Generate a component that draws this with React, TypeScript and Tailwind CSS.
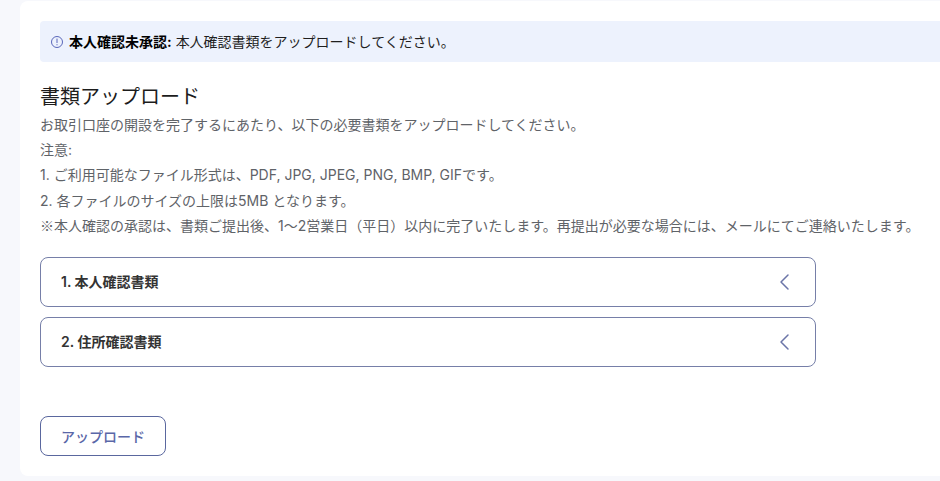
const FONT = "font-['Inter','Noto_Sans_CJK_JP',sans-serif]";

const Chevron = () => (
  <svg className="w-[24px] h-[24px] text-[#6b75a8]" fill="none" viewBox="0 0 24 24" strokeWidth={1.5} stroke="currentColor">
    <path strokeLinecap="round" strokeLinejoin="round" d="M16 5l-7 7 7 7" />
  </svg>
);

const InfoIcon = () => (
  <svg className="w-[14px] h-[14px] text-[#5a67ba] shrink-0" fill="none" viewBox="0 0 14 14" stroke="currentColor" strokeWidth={1}>
    <circle cx="7" cy="7" r="5.5" />
    <path strokeLinecap="round" d="M7 4v3.6M7 9.6v.3" />
  </svg>
);

const SECTIONS = ['1. 本人確認書類', '2. 住所確認書類'];

export default function App() {
  return (
    <div className={`h-[481px] overflow-hidden bg-[#f7f8fc] pl-[20px] pt-px ${FONT}`}>
      <div className="w-[960px] h-[475px] bg-white rounded-[8px] pl-[20px] pr-[20px] pt-[20px]">
        {/* Alert */}
        <div className="h-[41px] w-full bg-[#edf2fd] rounded-[4px] flex items-center pl-[10px] gap-[5px] text-[14px] text-[#1f1f1f]">
          <InfoIcon />
          <p><span className="font-bold text-black">本人確認未承認:</span> 本人確認書類をアップロードしてください。</p>
        </div>

        {/* Heading */}
        <h1 className="mt-[21px] text-[20px] leading-[28px] text-[#1c1c1c]">書類アップロード</h1>
        <div className="text-[14px] leading-[25.2px] text-[#5f6368] mt-[1px] whitespace-nowrap">
          <p>お取引口座の開設を完了するにあたり、以下の必要書類をアップロードしてください。</p>
          <p>注意:</p>
          <p>1. ご利用可能なファイル形式は、PDF, JPG, JPEG, PNG, BMP, GIFです。</p>
          <p>2. 各ファイルのサイズの上限は5MB となります。</p>
          <p><span className="font-['Noto_Sans_CJK_JP',sans-serif]">※</span>本人確認の承認は、書類ご提出後、1〜2営業日（平日）以内に完了いたします。再提出が必要な場合には、メールにてご連絡いたします。</p>
        </div>

        {/* Accordions */}
        <div className="mt-[19px] w-[776px] flex flex-col gap-[10px]">
          {SECTIONS.map((label) => (
            <div key={label} className="h-[50px] border border-[#767fa8] rounded-[8px] flex items-center justify-between pl-[20px] pr-[19px]">
              <span className="text-[14px] font-semibold text-[#333333] -translate-y-px">{label}</span>
              <Chevron />
            </div>
          ))}
        </div>

        <button type="button" className="mt-[49px] w-[126px] h-[40px] border border-[#5a679e] rounded-[8px] text-[14px] font-medium text-[#5a67a8] bg-white">
          アップロード
        </button>
      </div>
    </div>
  );
}
